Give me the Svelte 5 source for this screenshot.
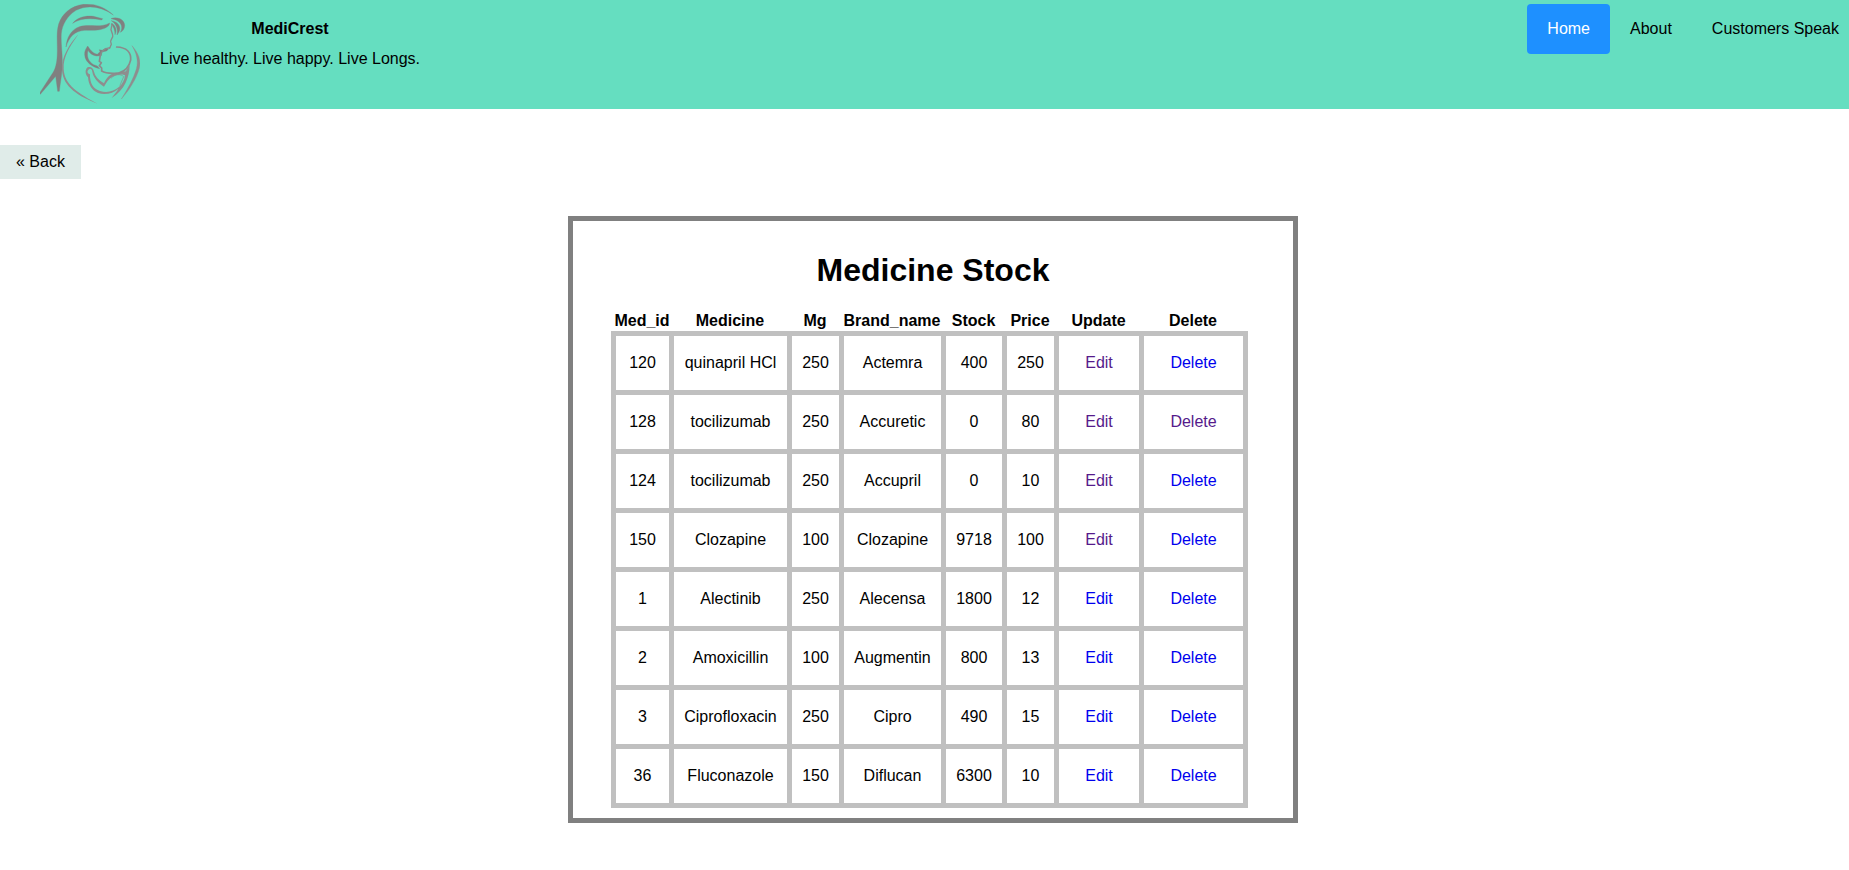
<script>
  const columns = ['Med_id', 'Medicine', 'Mg', 'Brand_name', 'Stock', 'Price', 'Update', 'Delete'];

  const medicines = [
    { id: 120, name: 'quinapril HCl', mg: 250, brand: 'Actemra', stock: 400, price: 250, edited: true },
    { id: 128, name: 'tocilizumab', mg: 250, brand: 'Accuretic', stock: 0, price: 80, edited: true, deleted: true },
    { id: 124, name: 'tocilizumab', mg: 250, brand: 'Accupril', stock: 0, price: 10, edited: true },
    { id: 150, name: 'Clozapine', mg: 100, brand: 'Clozapine', stock: 9718, price: 100, edited: true },
    { id: 1, name: 'Alectinib', mg: 250, brand: 'Alecensa', stock: 1800, price: 12 },
    { id: 2, name: 'Amoxicillin', mg: 100, brand: 'Augmentin', stock: 800, price: 13 },
    { id: 3, name: 'Ciprofloxacin', mg: 250, brand: 'Cipro', stock: 490, price: 15 },
    { id: 36, name: 'Fluconazole', mg: 150, brand: 'Diflucan', stock: 6300, price: 10 }
  ];
</script>

<header>
  <svg class="logo" viewBox="30 12 300 300" aria-hidden="true">
    <g fill="#808080" stroke="#808080" stroke-width="1">
      <path d="M250 45C222 19 190 10 160 13C122 18 96 42 86 72C79 96 82 120 82 150C82 180 79 200 70 216L29 279L31 283L77 229L83 274H88C91 246 97 220 97 185C97 155 92 125 94 100C97 74 111 48 138 31C172 13 214 19 250 45Z" />
      <path d="M128 70C142 52 167 46 190 49L218 56L215 60C184 54 150 54 128 70Z" />
      <path d="M108 141C110 111 125 88 148 80C178 71 211 85 239 69L237 76C222 93 189 91 164 91C134 93 117 111 108 141Z" />
      <path d="M243 56C260 49 283 57 284 76C284 87 278 94 271 97C282 80 271 59 243 56Z" />
      <path d="M244 62C267 66 279 85 261 105C265 88 259 72 244 62Z" />
      <path d="M246 70C258 80 261 91 255 104C255 89 250 78 243 72Z" />
      <path d="M173 138C181 149 186 159 202 163L210 155L208 149L217 151L226 145L236 146L230 153L216 156L214 167L200 168C187 167 179 159 174 151C169 171 176 185 191 194L202 198L209 206C187 201 165 187 164 164C163 153 168 146 173 138Z" />
    </g>
    <g fill="#8e8e8e">
      <path d="M145 103C119 141 99 171 101 207C103 256 148 281 202 311C148 290 99 262 96 211C93 171 119 132 145 103Z" />
      <path d="M306 137C326 160 334 181 328 205C319 237 299 269 274 297C293 267 310 237 319 207C326 181 319 159 306 137Z" stroke="#8e8e8e" stroke-width="1" />
      <path d="M173 202C182 198 190 205 192 215C195 229 205 240 222 250C229 233 241 221 257 218L288 214L291 207L299 196C298 231 285 270 245 294C254 282 260 275 265 266C250 280 226 286 204 279C185 272 176 254 174 232C164 222 165 208 173 202ZM178 207C170 212 171 220 180 223C179 249 190 268 210 273C247 284 282 260 285 226C278 222 261 223 246 231C236 237 229 248 222 260C205 249 190 234 187 216C186 209 183 205 178 207Z" fill-rule="evenodd" />
    </g>
    <g fill="none" stroke="#8b8b8b" stroke-linecap="round" stroke-linejoin="round">
      <path d="M246 74L243 89L248 104C251 112 241 119 242 125L244 133L239 145" stroke-width="4" />
      <path d="M211 166L208 184L214 188L208 197L215 204L215 213C228 221 247 221 266 219C286 214 298 198 302 180C304 157 290 142 260 141" stroke-width="5" />
      <path d="M211 166C214 155 225 145 239 143" stroke-width="4" />
      <path d="M244 234C254 222 273 221 281 230L270 256" stroke-width="2" />
    </g>
  </svg>

  <div class="brand">
    <strong>MediCrest</strong>
    <span>Live healthy. Live happy. Live Longs.</span>
  </div>

  <nav>
    <a class="active" href="#home">Home</a>
    <a href="#about">About</a>
    <a href="#customers">Customers Speak</a>
  </nav>
</header>

<a class="back" href="#back">« Back</a>

<main>
  <h1>Medicine Stock</h1>
  <table>
    <thead>
      <tr>
        {#each columns as column}
          <th>{column}</th>
        {/each}
      </tr>
    </thead>
    <tbody>
      {#each medicines as m}
        <tr>
          <td>{m.id}</td>
          <td>{m.name}</td>
          <td>{m.mg}</td>
          <td>{m.brand}</td>
          <td>{m.stock}</td>
          <td>{m.price}</td>
          <td><a class:seen={m.edited} href="#edit">Edit</a></td>
          <td><a class:seen={m.deleted} href="#delete">Delete</a></td>
        </tr>
      {/each}
    </tbody>
  </table>
</main>

<style>
  :global(body) {
    margin: 0;
    background: #fff;
    color: #000;
    font: 16px/18px "Liberation Sans", Arial, sans-serif;
  }

  a {
    color: inherit;
    text-decoration: none;
  }

  header {
    display: flex;
    align-items: flex-start;
    box-sizing: border-box;
    height: 109px;
    padding: 4px 10px 0 40px;
    background: #65dec0;
  }

  .logo {
    width: 100px;
    height: 100px;
  }

  .brand {
    display: flex;
    flex-direction: column;
    align-items: center;
    padding: 10px 20px;
    line-height: 30px;
  }

  nav {
    display: flex;
    gap: 40px;
    margin-left: auto;
    line-height: 25px;
  }

  nav a {
    padding: 12px 0 13px;
  }

  nav .active {
    margin-right: -20px;
    padding-inline: 20px;
    border-radius: 4px;
    background: #1e90ff;
    color: #fff;
  }

  .back {
    display: block;
    width: fit-content;
    margin-top: 36px;
    padding: 8px 16px;
    background: #e0ece9;
  }

  main {
    box-sizing: border-box;
    width: 730px;
    height: 607px;
    margin: 37px 0 0 568px;
    padding: 31px 38px 0;
    border: 5px solid #808080;
  }

  h1 {
    margin: 0 0 22px;
    font-size: 32px;
    line-height: 37px;
    text-align: center;
  }

  table,
  thead {
    display: block;
  }

  tr {
    display: grid;
    grid-template-columns: 53px 113px 47px 97px 56px 47px 80px 99px;
    column-gap: 5px;
  }

  th {
    display: flex;
    justify-content: center;
    height: 20px;
    padding: 0;
    line-height: 20px;
    white-space: nowrap;
  }

  thead tr {
    padding: 0 5px 0 4.5px;
  }

  tbody {
    display: grid;
    gap: 5px;
    width: 627px;
    padding: 5px;
    background: #c0c0c0;
  }

  td {
    display: flex;
    align-items: center;
    justify-content: center;
    height: 54px;
    padding: 0;
    background: #fff;
  }

  td a {
    color: #0000ee;
  }

  td .seen {
    color: #551a8b;
  }
</style>
